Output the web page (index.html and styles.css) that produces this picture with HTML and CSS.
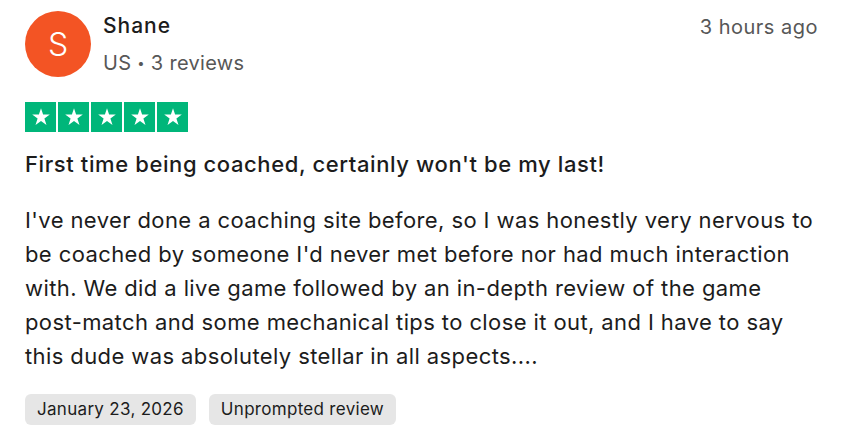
FILE: index.html
```html
<!DOCTYPE html>
<html lang="en">
<head>
<meta charset="utf-8">
<link rel="stylesheet" href="styles.css">
</head>
<body>
<article class="review">
  <header class="head">
    <div class="avatar">S</div>
    <div class="who">
      <div class="name">Shane</div>
      <div class="meta">US <span class="dot">•</span> 3 reviews</div>
    </div>
    <div class="time">3 hours ago</div>
  </header>
  <div class="stars">
    <span class="star"><svg viewBox="0 0 24 24"><path d="M12 3.2l2.1 6.4h6.7l-5.4 3.9 2.1 6.4L12 16l-5.5 3.9 2.1-6.4-5.4-3.9h6.7z" fill="#fff"/></svg></span>
    <span class="star"><svg viewBox="0 0 24 24"><path d="M12 3.2l2.1 6.4h6.7l-5.4 3.9 2.1 6.4L12 16l-5.5 3.9 2.1-6.4-5.4-3.9h6.7z" fill="#fff"/></svg></span>
    <span class="star"><svg viewBox="0 0 24 24"><path d="M12 3.2l2.1 6.4h6.7l-5.4 3.9 2.1 6.4L12 16l-5.5 3.9 2.1-6.4-5.4-3.9h6.7z" fill="#fff"/></svg></span>
    <span class="star"><svg viewBox="0 0 24 24"><path d="M12 3.2l2.1 6.4h6.7l-5.4 3.9 2.1 6.4L12 16l-5.5 3.9 2.1-6.4-5.4-3.9h6.7z" fill="#fff"/></svg></span>
    <span class="star"><svg viewBox="0 0 24 24"><path d="M12 3.2l2.1 6.4h6.7l-5.4 3.9 2.1 6.4L12 16l-5.5 3.9 2.1-6.4-5.4-3.9h6.7z" fill="#fff"/></svg></span>
  </div>
  <h2 class="title">First time being coached, certainly won't be my last!</h2>
  <p class="body">I've never done a coaching site before, so I was honestly very nervous to be coached by someone I'd never met before nor had much interaction with. We did a live game followed by an in-depth review of the game post-match and some mechanical tips to close it out, and I have to say this dude was absolutely stellar in all aspects....</p>
  <div class="tags">
    <span class="tag">January 23, 2026</span>
    <span class="tag">Unprompted review</span>
  </div>
</article>
</body>
</html>
```
FILE: styles.css
```css
html, body {
  margin: 0;
  padding: 0;
  background: #fff;
}
body {
  font-family: Inter, "Noto Sans", sans-serif;
  color: #1c1c1c;
}
.review {
  padding: 11px 29px 0 25px;
}
.head {
  display: flex;
  align-items: flex-start;
}
.avatar {
  width: 66px;
  height: 66px;
  border-radius: 50%;
  background: #f35424;
  color: #fff;
  display: flex;
  align-items: center;
  justify-content: center;
  font-size: 32px;
  font-weight: 300;
  flex: none;
}
.who {
  margin-left: 12px;
  flex: 1;
}
.name {
  font-size: 21px;
  font-weight: 500;
  letter-spacing: 1px;
  line-height: 30px;
  color: #1c1c1c;
}
.meta {
  font-size: 20px;
  line-height: 30px;
  margin-top: 7px;
  letter-spacing: 0.3px;
  color: #575757;
}
.dot {
  font-size: 13px;
  vertical-align: 2px;
}
.time {
  font-size: 20px;
  line-height: 30px;
  margin-top: 1px;
  letter-spacing: 0.5px;
  color: #575757;
}
.stars {
  display: flex;
  gap: 2px;
  margin-top: 24px;
}
.star {
  width: 31px;
  height: 30px;
  background: #00b67a;
  display: flex;
  align-items: center;
  justify-content: center;
}
.star svg {
  width: 24px;
  height: 24px;
}
.title {
  font-size: 22px;
  font-weight: 500;
  letter-spacing: 0.6px;
  line-height: 30px;
  margin: 17px 0 0;
}
.body {
  font-size: 22px;
  line-height: 34px;
  letter-spacing: 0.4px;
  margin: 24px 0 0;
}
.tags {
  display: flex;
  gap: 13px;
  margin-top: 21px;
}
.tag {
  background: #e6e6e6;
  border-radius: 6px;
  font-size: 17px;
  line-height: 31px;
  letter-spacing: 0.3px;
  padding: 0 12px;
  color: #1c1c1c;
}
```
